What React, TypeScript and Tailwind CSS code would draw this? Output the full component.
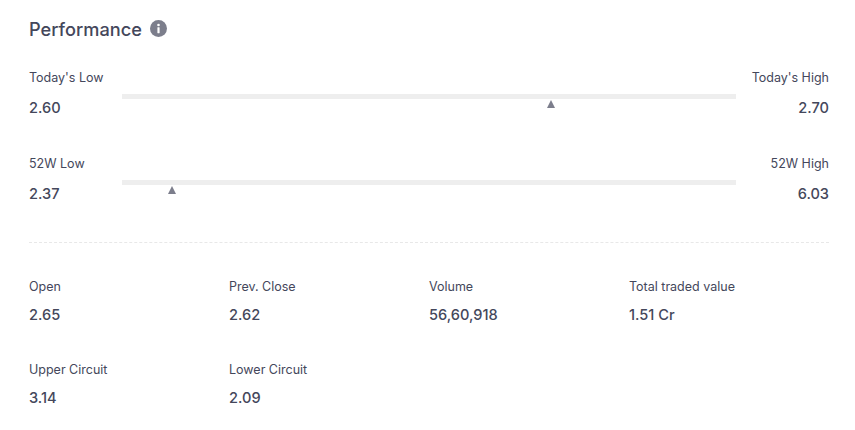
const ranges = [
  { lowLabel: "Today's Low", low: "2.60", highLabel: "Today's High", high: "2.70", marker: "ml-[425px]" },
  { lowLabel: "52W Low", low: "2.37", highLabel: "52W High", high: "6.03", marker: "ml-[46px]" },
];

const stats = [
  { label: "Open", value: "2.65" },
  { label: "Prev. Close", value: "2.62" },
  { label: "Volume", value: "56,60,918" },
  { label: "Total traded value", value: "1.51 Cr" },
  { label: "Upper Circuit", value: "3.14" },
  { label: "Lower Circuit", value: "2.09" },
];

function InfoIcon() {
  return (
    <svg width="17" height="17" viewBox="0 0 17 17">
      <circle cx="8.5" cy="8.5" r="8.5" fill="#7c7e8c" />
      <circle cx="8.5" cy="5" r="1.3" fill="#fff" />
      <rect x="7.4" y="7.2" width="2.2" height="6" rx="0.4" fill="#fff" />
    </svg>
  );
}

export default function App() {
  return (
    <div className="h-[430px] w-[855px] bg-white pl-[29px] pt-[17px] font-['Inter',sans-serif] text-[#44475b]">
      <div className="flex h-[24px] items-start gap-[8px]">
        <strong className="text-[18.2px] font-medium leading-[24px]">Performance</strong>
        <span className="mt-[3px] block"><InfoIcon /></span>
      </div>

      <div className="mt-[26px] flex w-[800px] flex-col gap-[23px]">
        {ranges.map((r) => (
          <div key={r.lowLabel} className="flex h-[63px] items-start justify-between">
            <div className="w-[93px]">
              <p className="whitespace-nowrap text-[12.5px] leading-[22px]">{r.lowLabel}</p>
              <p className="mt-[8px] text-[14.6px] font-medium leading-[22px]">{r.low}</p>
            </div>
            <div className="mt-[27px] w-[614px]">
              <div className="h-[5px] bg-[#eeeeee]" />
              <div className={`mt-[1px] h-0 w-0 border-x-[4px] border-b-[8px] border-x-transparent border-b-[#7c7e8c] ${r.marker}`} />
            </div>
            <div className="w-[93px] text-right">
              <p className="whitespace-nowrap text-[12.5px] leading-[22px]">{r.highLabel}</p>
              <p className="mt-[8px] text-[14.6px] font-medium leading-[22px]">{r.high}</p>
            </div>
          </div>
        ))}
      </div>

      <div className="mt-[26px] w-[800px] border-t border-dashed border-[#e8e8e8]" />

      <div className="mt-[33px] grid w-[800px] grid-cols-4 gap-y-[32px]">
        {stats.map((s) => (
          <div key={s.label}>
            <p className="text-[12.5px] leading-[22px]">{s.label}</p>
            <p className="mt-[5px] text-[14.6px] font-medium leading-[24px]">{s.value}</p>
          </div>
        ))}
      </div>
    </div>
  );
}
